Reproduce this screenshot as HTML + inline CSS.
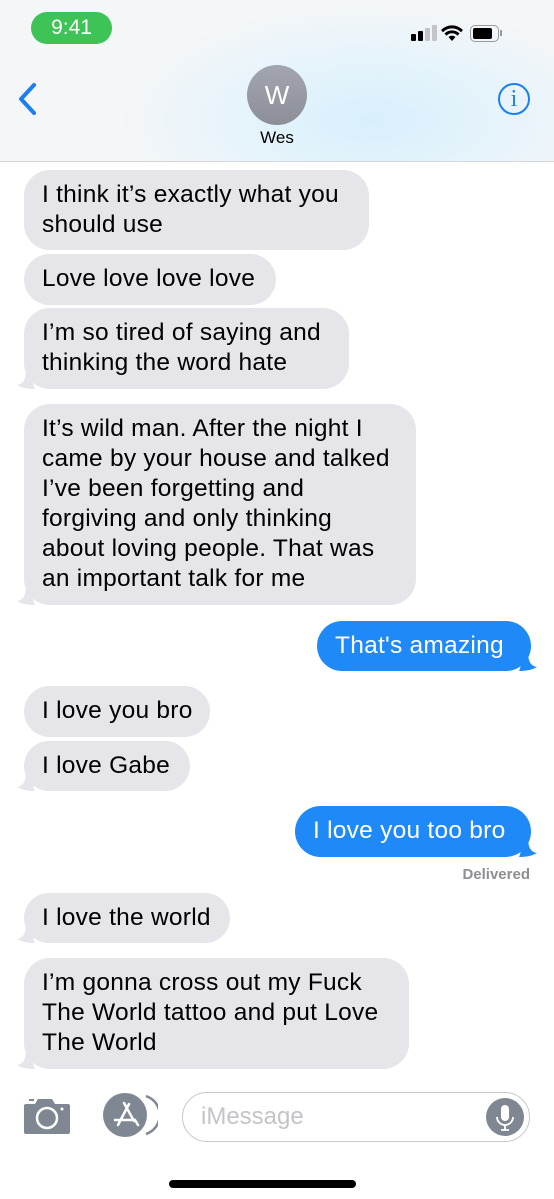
<!DOCTYPE html>
<html><head><meta charset="utf-8"><style>
*{margin:0;padding:0;box-sizing:border-box}
body{width:554px;height:1199px;background:#fff;position:relative;overflow:hidden;font-family:"Liberation Sans",sans-serif}
.hdr{position:absolute;left:0;top:0;width:554px;height:162px;background:radial-gradient(ellipse 260px 120px at 370px 120px,#d8effc 0%,#e6f4fb 50%,rgba(244,246,248,0) 100%),#f5f6f8;border-bottom:1px solid #d6d6d9}
.b{position:absolute;border-radius:26px;font-size:24.5px;letter-spacing:0.25px;line-height:30px;padding:10px 18px;color:#000;background:#e5e5ea;white-space:nowrap}
.b.u{background:#1f8af7;color:#fff}
.t{position:absolute;width:20px;height:20px}
</style></head><body>
<div class="hdr"></div>
<div style="position:absolute;left:31px;top:12px;width:81px;height:32px;border-radius:16px;background:#3dc356;color:#fff;font-size:21px;text-align:center;line-height:32px">9:41</div>
<div style="position:absolute;left:411px;top:34px;width:5px;height:7px;background:#000;border-radius:1px"></div>
<div style="position:absolute;left:418px;top:31px;width:5px;height:10px;background:#000;border-radius:1px"></div>
<div style="position:absolute;left:425px;top:28px;width:5px;height:13px;background:#c4c4c8;border-radius:1px"></div>
<div style="position:absolute;left:432px;top:25px;width:5px;height:16px;background:#c4c4c8;border-radius:1px"></div>
<svg style="position:absolute;left:440px;top:24px" width="24" height="18" viewBox="0 0 24 18"><path d="M12 17l3.5-4a5 5 0 0 0-7 0z M4.5 9.5a10.5 10.5 0 0 1 15 0l-2 2.2a7.5 7.5 0 0 0-11 0z M1 6a15.5 15.5 0 0 1 22 0l-2 2.2a12.5 12.5 0 0 0-18 0z" fill="#000"/></svg>
<div style="position:absolute;left:470px;top:25px;width:29px;height:17px;border:1.5px solid #9a9a9e;border-radius:5px"></div>
<div style="position:absolute;left:473px;top:28px;width:19px;height:11px;background:#000;border-radius:2px"></div>
<div style="position:absolute;left:500px;top:30px;width:2px;height:6px;background:#9a9a9e"></div>
<svg style="position:absolute;left:16px;top:82px" width="24" height="34" viewBox="0 0 24 34"><path d="M18 3L5 17l13 14" stroke="#1a7ff0" stroke-width="4" fill="none" stroke-linecap="round" stroke-linejoin="round"/></svg>
<div style="position:absolute;left:247px;top:65px;width:60px;height:60px;border-radius:50%;background:linear-gradient(#a3a6b0,#8c8e98);color:#fff;font-size:26px;text-align:center;line-height:60px">W</div>
<div style="position:absolute;left:0;width:554px;top:128px;text-align:center;font-size:17px;color:#000">Wes</div>
<div style="position:absolute;left:498px;top:83px;width:32px;height:32px;border:2px solid #1a7ff0;border-radius:50%;color:#1a7ff0;font-family:'Liberation Serif',serif;font-size:24px;text-align:center;line-height:28px">i</div>

<div class="b" style="left:24px;top:170px;width:345px;height:80px">I think it’s exactly what you<br>should use</div>
<div class="b" style="left:24px;top:254px;width:252px;height:51px">Love love love love</div>
<div class="b" style="left:24px;top:308px;width:325px;height:81px">I’m so tired of saying and<br>thinking the word hate</div>
<svg class="t" style="left:15px;top:369px" viewBox="0 0 20 20"><path d="M18 0v10c0 5 1 8 2 10-7 0-13-1-18-4 6-1 9-5 9-16z" fill="#e5e5ea"/></svg>
<div class="b" style="left:24px;top:404px;width:392px;height:201px">It’s wild man. After the night I<br>came by your house and talked<br>I’ve been forgetting and<br>forgiving and only thinking<br>about loving people. That was<br>an important talk for me</div>
<svg class="t" style="left:15px;top:585px" viewBox="0 0 20 20"><path d="M18 0v10c0 5 1 8 2 10-7 0-13-1-18-4 6-1 9-5 9-16z" fill="#e5e5ea"/></svg>
<div class="b u" style="left:317px;top:621px;width:214px;height:50px">That's amazing</div>
<svg class="t" style="left:519px;top:651px" viewBox="0 0 20 20"><path d="M2 0v10c0 5-1 8-2 10 7 0 13-1 18-4-6-1-9-5-9-16z" fill="#1f8af7"/></svg>
<div class="b" style="left:24px;top:686px;width:186px;height:51px">I love you bro</div>
<div class="b" style="left:24px;top:741px;width:166px;height:50px">I love Gabe</div>
<svg class="t" style="left:15px;top:771px" viewBox="0 0 20 20"><path d="M18 0v10c0 5 1 8 2 10-7 0-13-1-18-4 6-1 9-5 9-16z" fill="#e5e5ea"/></svg>
<div class="b u" style="left:295px;top:806px;width:236px;height:51px">I love you too bro</div>
<svg class="t" style="left:519px;top:837px" viewBox="0 0 20 20"><path d="M2 0v10c0 5-1 8-2 10 7 0 13-1 18-4-6-1-9-5-9-16z" fill="#1f8af7"/></svg>
<div style="position:absolute;right:24px;top:866px;font-size:15px;font-weight:bold;color:#8e8e93">Delivered</div>
<div class="b" style="left:24px;top:893px;width:206px;height:50px">I love the world</div>
<svg class="t" style="left:15px;top:923px" viewBox="0 0 20 20"><path d="M18 0v10c0 5 1 8 2 10-7 0-13-1-18-4 6-1 9-5 9-16z" fill="#e5e5ea"/></svg>
<div class="b" style="left:24px;top:958px;width:385px;height:111px">I’m gonna cross out my Fuck<br>The World tattoo and put Love<br>The World</div>
<svg class="t" style="left:15px;top:1049px" viewBox="0 0 20 20"><path d="M18 0v10c0 5 1 8 2 10-7 0-13-1-18-4 6-1 9-5 9-16z" fill="#e5e5ea"/></svg>

<svg style="position:absolute;left:23px;top:1097px" width="48" height="38" viewBox="0 0 48 38"><path d="M3 7h9l3-5h14l3 5h13a2 2 0 0 1 2 2v26a2 2 0 0 1-2 2H3a2 2 0 0 1-2-2V9a2 2 0 0 1 2-2z" fill="#7f8793"/><rect x="6" y="2" width="5" height="2" fill="#7f8793"/><circle cx="24" cy="21" r="10" fill="none" stroke="#fff" stroke-width="2.5"/><circle cx="39" cy="12" r="1.5" fill="#fff"/></svg>
<svg style="position:absolute;left:102px;top:1092px" width="56" height="46" viewBox="0 0 56 46"><path d="M44 4a20 20 0 0 1 0 38" stroke="#7f8793" stroke-width="2.5" fill="none"/><circle cx="23" cy="23" r="22" fill="#7f8793"/><path d="M22 11l10 18M27 12l-11 21M13 28h20M33 28l3 5" stroke="#fff" stroke-width="2.5" stroke-linecap="round" fill="none"/></svg>
<div style="position:absolute;left:182px;top:1092px;width:348px;height:50px;border:1.5px solid #c8c8cc;border-radius:25px"></div>
<div style="position:absolute;left:201px;top:1103px;font-size:24px;color:#c4c4c8">iMessage</div>
<div style="position:absolute;left:486px;top:1098px;width:38px;height:38px;border-radius:50%;background:#7f8793"></div>
<svg style="position:absolute;left:486px;top:1098px" width="38" height="38" viewBox="0 0 38 38"><rect x="15" y="7" width="8" height="16" rx="4" fill="#fff"/><path d="M11 19a8 8 0 0 0 16 0M19 27v5M15 32h8" stroke="#fff" stroke-width="1.8" fill="none"/></svg>
<div style="position:absolute;left:169px;top:1180px;width:187px;height:8px;border-radius:4px;background:#000"></div>
</body></html>
